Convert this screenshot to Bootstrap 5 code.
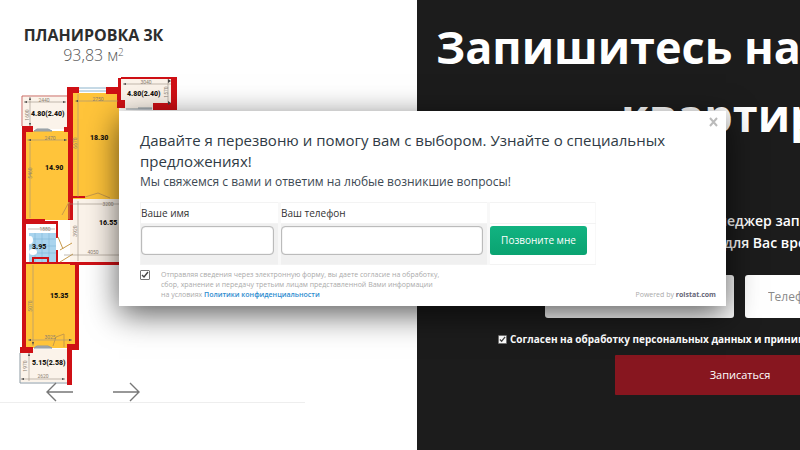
<!DOCTYPE html>
<html lang="ru">
<head>
<meta charset="utf-8">
<meta name="viewport" content="width=device-width, initial-scale=1">
<title>Планировка 3К</title>
<link href="https://cdn.jsdelivr.net/npm/bootstrap@5.3.0/dist/css/bootstrap.min.css" rel="stylesheet">
<style>
body { font-family: "Open Sans", sans-serif; color: #333c44; }
.plan-side { flex: 0 0 52.125%; }
.plan-slide { max-width: 305px; padding: 25px 0 0 18px; border-bottom: 1px solid #eee; }
.plan-box { width: 163px; }
.plan-head { padding-right: 12px; }
.plan-title { font-size: 16px; line-height: 20px; color: #2d2d2d; }
.plan-area { font-size: 16px; line-height: 20px; color: #555; }
.plan-area sup { font-size: 10px; top: -5px; line-height: 10px; }
.plan-svg { margin-top: 5px; }
.plan-nav { padding-left: 28px; gap: 38px; position: relative; margin-top: -6px; }
.sign-side { background: #1c1c1c; min-width: 0; }
.sign-title { font-size: 45px; line-height: 68px; padding: 13px 0 0 19px; }
.sign-second { padding-left: 185px; }
.sign-note { font-size: 14px; line-height: 22px; padding: 61px 0 0 280px; }
.sign-note-end { padding-left: 27px; }
.sign-fields { padding: 21px 0 0 128px; gap: 11px; }
.sign-fields .form-control { flex: 0 0 189px; height: 43px; border: 0; border-radius: 3px; font-size: 12px; padding: 0 23px; }
.sign-fields .form-control::placeholder { color: #8a8a8a; }
.sign-agree { font-size: 10px; line-height: 14px; padding: 14px 0 0 81px; gap: 3px; }
.tick { appearance: none; flex: none; margin: 0; width: 9px; height: 9px; border: 1px solid #777; border-radius: 1px; background: #fff; }
.tick:checked { background: #fff url("data:image/svg+xml,%3Csvg xmlns='http://www.w3.org/2000/svg' viewBox='0 0 8 8'%3E%3Cpath d='M1 4l2 2 4-5' fill='none' stroke='%23444' stroke-width='1.4'/%3E%3C/svg%3E") center/contain no-repeat; }
.sign-submit { background: #87161f; color: #fff; font-size: 11px; height: 40px; width: 250px; border-radius: 1px; margin: 9px 0 0 198px; }
.callback { position: absolute; left: 119px; top: 111px; width: 607px; background: #fff; padding: 19px 22px 6px 21px; box-shadow: 0 8px 30px rgba(0,0,0,.65); }
.callback-close { position: absolute; right: 7px; top: 5px; width: 11px; height: 12px; }
.callback-title { font-size: 15px; line-height: 21px; font-weight: 500; color: #303b45; }
.callback-lead { font-size: 12px; line-height: 20px; color: #3c4852; }
.callback-table { width: 456px; table-layout: fixed; margin-top: 10px; }
.callback-table th, .callback-table td { border: 1px solid #f3f3f3; border-right: 3px solid #f8f8f8; padding: 0; }
.callback-table th { height: 20px; font-size: 10px; line-height: 20px; font-weight: 400; color: #333; }
.callback-table th:last-child, .callback-table td:last-child { border-right-width: 1px; }
.col-name { width: 139px; }
.col-tel { width: 209px; }
.callback-table td { height: 41px; vertical-align: top; background: #f0f0f0; padding: 2px 4px 0 0; }
.callback-table td.go { background: #fff; padding: 2px 7px 0 0; }
.callback-table label { display: block; }
.callback-table .form-control { height: 29px; border: 1px solid #bbb; border-radius: 4px; font-size: 11px; box-shadow: inset 0 0 1px #999; }
.call-btn { width: 97px; height: 29px; color: #fff; background: linear-gradient(#12b381, #0aa371); border-radius: 3px; font-size: 10px; }
.callback-consent { font-size: 7px; line-height: 10px; color: #aaa; padding-top: 5px; gap: 11px; }
.callback-consent .tick { width: 10px; height: 10px; }
.callback-consent a { color: #2c8ccf; }
.powered { font-size: 7px; line-height: 10px; color: #aaa; margin-right: -12px; }
.powered a { color: #667; }
</style>
</head>
<body>
<div class="d-flex min-vh-100 overflow-hidden position-relative bg-white">
  <section class="plan-side">
    <div class="plan-slide">
      <div class="plan-box">
        <div class="plan-head text-center">
          <h2 class="plan-title fw-bold mb-0 text-nowrap">ПЛАНИРОВКА 3К</h2>
          <p class="plan-area fw-light mb-0">93,83 м<sup>2</sup></p>
        </div>
        <svg class="plan-svg d-block" width="163" height="318" viewBox="18 70 163 318" role="img" aria-label="План квартиры">
          <path fill="#fbf3ea" d="M23 97h47v32H23zM121 78h55v31h-55zM70 199h110v64H70zM20 349h47v33H20z"/>
          <path fill="#ffc43a" d="M26 131h44v89H26zM73 93h46v106H73zM26 264h49v84H26z"/>
          <path fill="#a9d4ee" d="M29 233h27v29H29z"/>
          <path d="M29 239h27M29 246h27M29 253h27M35 233v29M42 233v29M49 233v29" stroke="#7fb5d6" stroke-width=".6"/>
          <path fill="#fff" d="M28 224h28v9H28z"/>
          <g fill="#cf1015">
            <path d="M22 126h11v6h-7v217h-4zM64 127h7v5h-7zM67 87h12v6h-6v127h-5v-88h-4v-5h3zM106 87h12v-9h3v22h4v8h-8v-14h-11zM26 219h19v2H26zM171 77h6v33h-24v-7h18zM69 186h4v9h-4zM71 196h14v2H71zM26 221h32v3H26zM56 224h2v14h-2zM56 250h2v13h-2zM26 262h53v2H26zM75 262h4v88h-12v-6h8zM70 262h70v3H70zM20 347h13v6H20zM67 348h5v37h-5zM121 77h50v2h-50zM32 257h17v6h-2v-4H34v4h-2z"/>
          </g>
          <g fill="none" stroke="#8d9aa3">
            <path d="M79 88h27M79 91h27" stroke="#8db4cc"/>
            <path d="M22 126V96h45" stroke="#c9695f"/>
            <path d="M34 131h18l-4-2H37zM34 348h18l-4-2H37zM126 109h26M138 108h14" fill="#aaa"/>
            <path d="M20 353v30h47"/>
            <path d="M62 215l7-13v17M60 250l12-7M58 237l5 12M60 262l13-8M85 197l13-4 12 5M53 346l3-9 8-3v13" stroke="#c79a4b"/>
          </g>
          <g fill="none" stroke="#9a9083" stroke-width=".6">
            <path d="M24 102h42M30 97v29M77 101h41M78 94v103M27 140h40M30 142v76M70 204h50M78 201v60M64 255h62M28 229h27M123 84h48M168 79v24M28 340h44M33 265v81M21 379h44M29 353v28"/>
          </g>
          <g fill="#444"><path d="M24 102l3-1v2zM66 102l-3-1v2zM30 97l1 3h-2zM30 126l1-3h-2zM75 101l3-1v2zM28 140l3-1v2zM67 140l-3-1v2zM123 84l3-1v2zM171 81l-3-2v4zM171 103l-3-2v4zM28 340l3-1v2zM72 340l-3-1v2zM33 345l1-3h-2zM21 379l3-1v2zM65 379l-3-1v2zM29 353l1 3h-2z"/></g>
          <ellipse cx="33" cy="252" rx="4" ry="3" fill="#fff"/><ellipse cx="30" cy="240" rx="3" ry="4" fill="#fff"/>
          <g font-family="Roboto, sans-serif" font-weight="900" font-size="7" fill="#17130f">
            <text x="31" y="116">4.80(2.40)</text><text x="127" y="96">4.80(2.40)</text>
            <text x="45" y="170">14.90</text><text x="90" y="140">18.30</text>
            <text x="99" y="225">16.55</text><text x="32" y="249">3.95</text>
            <text x="50" y="298">15.35</text><text x="32" y="365">5.15(2.58)</text>
          </g>
          <g font-family="Roboto, sans-serif" font-size="5" fill="#8b8071" text-anchor="middle">
            <text x="44" y="102">2440</text><text x="98" y="101">2750</text><text x="146" y="84">3040</text>
            <text x="50" y="140">2470</text><text x="45" y="231">1880</text><text x="108" y="206">3200</text>
            <text x="93" y="254">4050</text><text x="50" y="339">3025</text><text x="43" y="378">2620</text>
            <text transform="translate(29 115) rotate(-90)">1600</text><text transform="translate(77 143) rotate(-90)">6670</text>
            <text transform="translate(32 173) rotate(-90)">5460</text><text transform="translate(168 92) rotate(-90)">1570</text>
            <text transform="translate(77 231) rotate(-90)">3920</text><text transform="translate(32 306) rotate(-90)">5070</text>
            <text transform="translate(27 366) rotate(-90)">1970</text>
          </g>
        </svg>
        <div class="plan-nav d-flex">
          <button type="button" class="btn p-0 border-0 d-flex" aria-label="Назад"><svg width="28" height="20" viewBox="0 0 28 20" fill="none" stroke="#777" stroke-width="1.4"><path d="M27 10H2M10 1L1 10l9 9"/></svg></button>
          <button type="button" class="btn p-0 border-0 d-flex" aria-label="Вперёд"><svg width="28" height="20" viewBox="0 0 28 20" fill="none" stroke="#777" stroke-width="1.4"><path d="M1 10h25M18 1l9 9-9 9"/></svg></button>
        </div>
      </div>
    </div>
  </section>
  <section class="sign-side flex-grow-1 overflow-hidden text-white text-nowrap">
    <h1 class="sign-title fw-bold mb-0">Запишитесь на<br><span class="sign-second">квартиры</span></h1>
    <p class="sign-note fw-semibold mb-0">Менеджер запишет<br><span class="sign-note-end">для Вас время</span></p>
    <form>
      <div class="sign-fields d-flex">
        <input class="form-control" type="text" aria-label="Имя">
        <input class="form-control" type="tel" placeholder="Телефон" aria-label="Телефон">
      </div>
      <div class="sign-agree d-flex align-items-center fw-bold">
        <input class="tick" type="checkbox" id="agree" checked>
        <label for="agree">Согласен на обработку персональных данных и принимаю</label>
      </div>
      <button type="button" class="sign-submit btn border-0 p-0">Записаться</button>
    </form>
  </section>

  <div class="callback" role="dialog" aria-labelledby="cb-title">
    <button type="button" class="callback-close btn p-0 border-0 d-flex" aria-label="Закрыть"><svg width="11" height="12" viewBox="0 0 11 12" stroke="#bbb" stroke-width="2"><path d="M2 2l7 8M9 2l-7 8"/></svg></button>
    <h2 class="callback-title mb-0" id="cb-title">Давайте я перезвоню и помогу вам с выбором. Узнайте о специальных предложениях!</h2>
    <p class="callback-lead mb-0">Мы свяжемся с вами и ответим на любые возникшие вопросы!</p>
    <form>
      <table class="callback-table">
        <colgroup><col class="col-name"><col class="col-tel"><col></colgroup>
        <tr><th><label for="cb-name">Ваше имя</label></th><th><label for="cb-tel">Ваш телефон</label></th><th></th></tr>
        <tr>
          <td><input class="form-control" type="text" id="cb-name"></td>
          <td><input class="form-control" type="tel" id="cb-tel"></td>
          <td class="go"><button type="button" class="call-btn btn border-0 p-0 d-block">Позвоните мне</button></td>
        </tr>
      </table>
      <div class="d-flex align-items-end justify-content-between">
        <div class="callback-consent d-flex">
          <input class="tick" type="checkbox" id="cb-agree" checked>
          <label for="cb-agree">Отправляя сведения через электронную форму, вы даете согласие на обработку,<br>сбор, хранение и передачу третьим лицам представленной Вами информации<br>на условиях <a class="fw-semibold text-decoration-none" href="#">Политики конфиденциальности</a></label>
        </div>
        <div class="powered">Powered by <a class="fw-bold text-decoration-none" href="#">rolstat.com</a></div>
      </div>
    </form>
  </div>
</div>
<script src="https://cdn.jsdelivr.net/npm/bootstrap@5.3.0/dist/js/bootstrap.bundle.min.js"></script>
</body>
</html>
